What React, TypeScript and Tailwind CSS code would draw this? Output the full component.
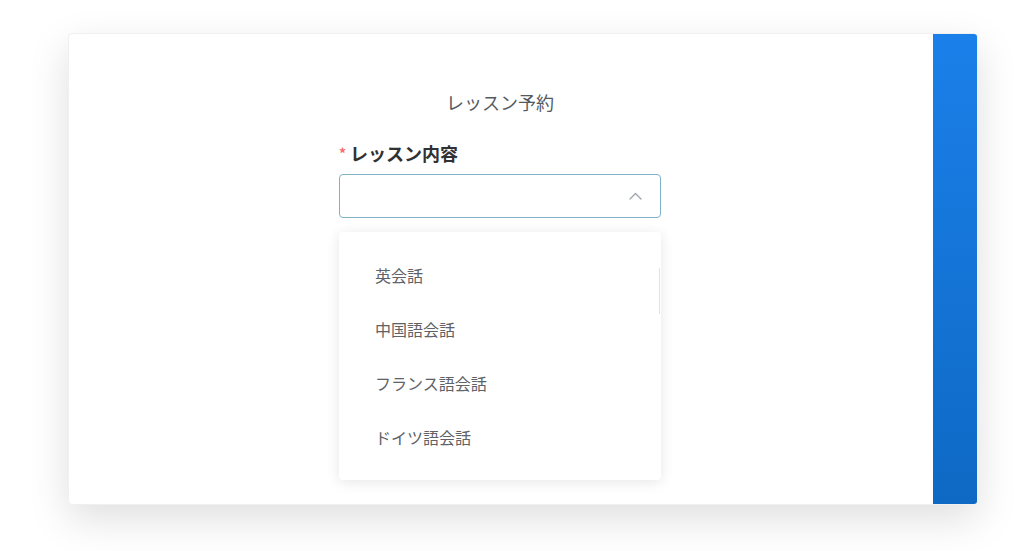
const lessons = ['英会話', '中国語会話', 'フランス語会話', 'ドイツ語会話']

function ArrowUp() {
  return (
    <svg width="13" height="8" viewBox="0 0 13 8" fill="none" className="text-[#9da1a8]">
      <path d="M1 7 6.5 1.5 12 7" stroke="currentColor" strokeWidth="1.3" strokeLinecap="round" strokeLinejoin="round" />
    </svg>
  )
}

export default function App() {
  return (
    <div
      className="w-[1024px] h-[551px] bg-white overflow-hidden pt-[33px] pl-[68px]"
      style={{ fontFamily: '"Noto Sans CJK JP", "Noto Sans", sans-serif' }}
    >
      <div className="flex w-[910px] h-[472px] rounded-[4px] bg-white overflow-hidden shadow-[0_14px_40px_rgba(0,0,0,0.13)] border border-[#f0f0f0]">
        <div className="flex-1 flex flex-col items-center pt-[56px] pr-[2px]">
          <h1 className="text-[18px] leading-6 text-[#555a60]">レッスン予約</h1>

          <div className="relative w-[322px] mt-[26px]">
            <div className="flex items-center h-[26px] text-[18px] font-bold text-[#303133]">
              <span className="mr-[4px] text-[14px] text-[#f56c6c]">*</span>
              レッスン内容
            </div>

            <div className="mt-[8px] flex items-center justify-end h-[44px] rounded-[4px] border border-[#7fb1c9] pr-[18px]">
              <ArrowUp />
            </div>

            {/* next field, mostly hidden under the menu */}
            <div className="mt-[50px] h-[46px] rounded-[4px] border border-[#dcdfe6]" />

            <ul className="absolute left-0 top-[92px] w-[322px] py-[16px] bg-white rounded-[4px] shadow-[0_2px_14px_rgba(0,0,0,0.1)]">
              <span className="absolute right-[1px] top-[36px] h-[46px] w-px bg-[#e2e2e2]" />
              {lessons.map((name) => (
                <li
                  key={name}
                  className="flex items-center h-[54px] pl-[36px] text-[16px] text-[#606266]"
                >
                  {name}
                </li>
              ))}
            </ul>
          </div>
        </div>

        <div className="w-[44px] bg-gradient-to-b from-[#1b80ea] to-[#0e69c4]" />
      </div>
    </div>
  )
}
